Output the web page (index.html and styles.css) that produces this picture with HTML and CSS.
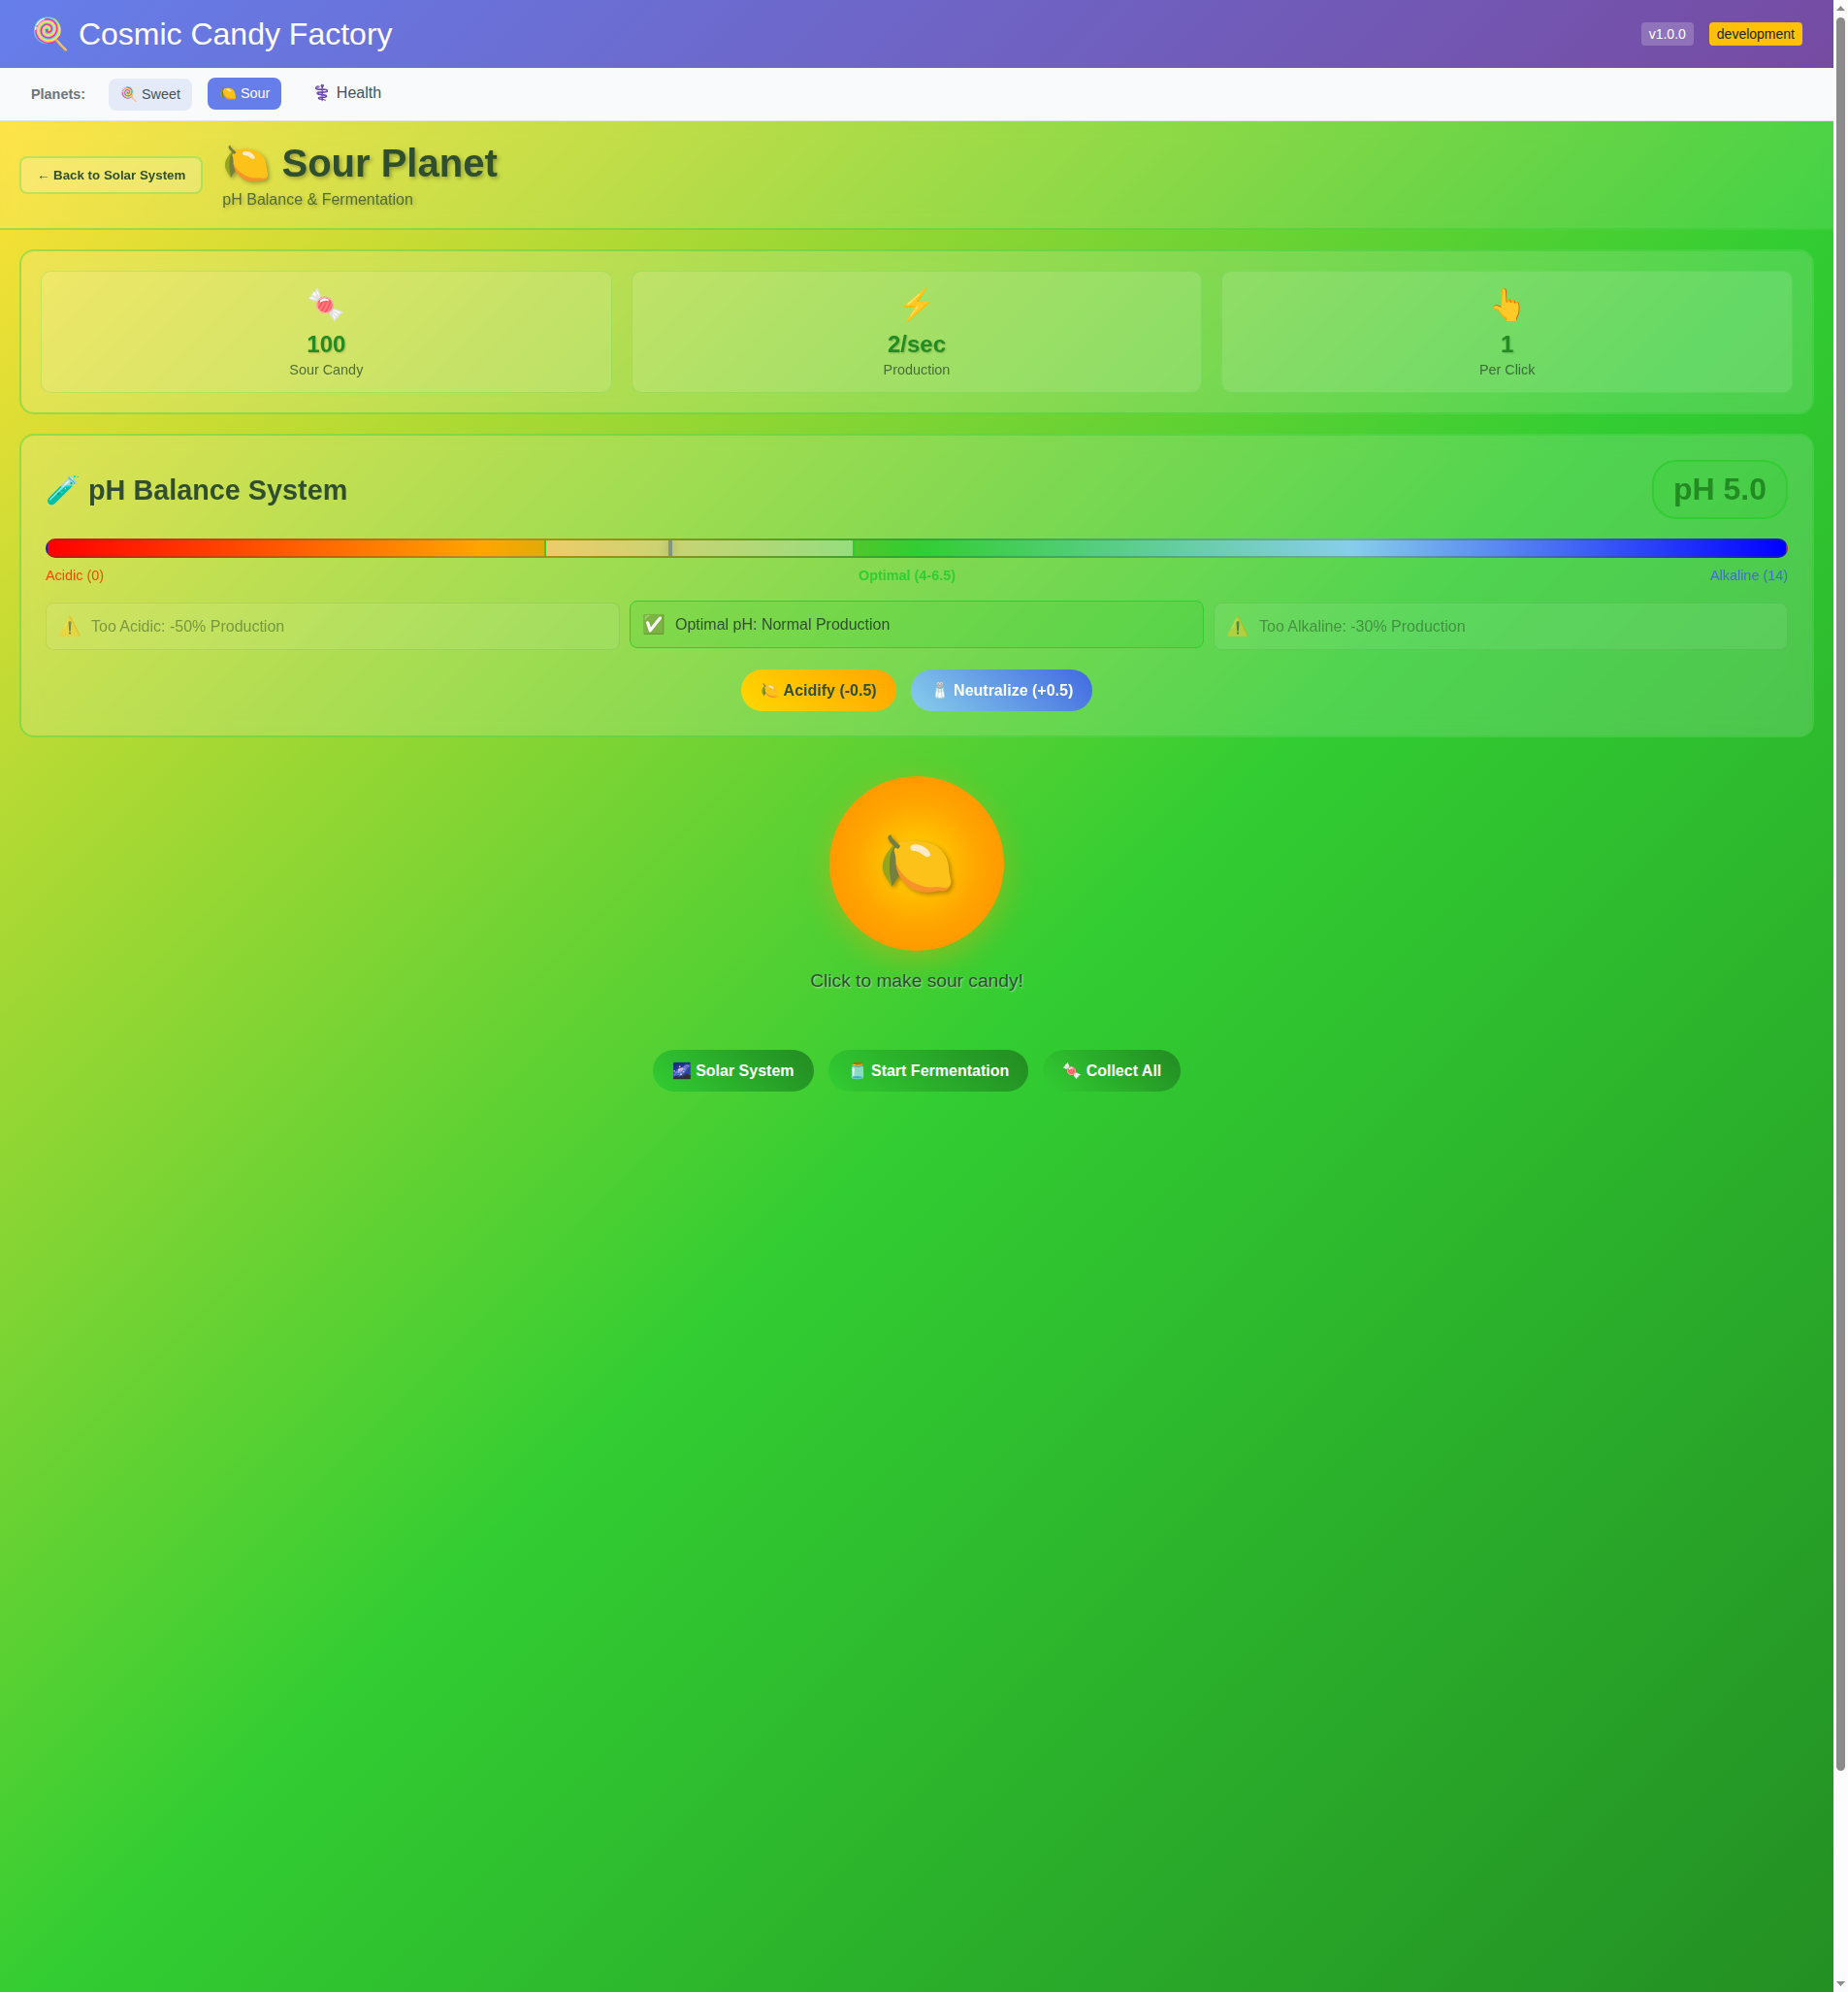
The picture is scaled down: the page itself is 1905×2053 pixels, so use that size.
FILE: index.html
```
<!DOCTYPE html>
<html lang="en">
<head>
<meta charset="UTF-8">
<title>Cosmic Candy Factory</title>
<link rel="stylesheet" href="styles.css">
</head>
<body>
<div class="window">
  <div class="app">
    <header class="app-header">
      <div class="app-title">🍭 Cosmic Candy Factory</div>
      <div class="app-info">
        <span class="badge badge-version">v1.0.0</span>
        <span class="badge badge-env">development</span>
      </div>
    </header>
    <nav class="planet-nav">
      <span class="nav-label">Planets:</span>
      <a class="nav-item nav-sweet">🍭 Sweet</a>
      <a class="nav-item nav-active">🍋 Sour</a>
      <a class="nav-item nav-health">⚕️ Health</a>
    </nav>
    <main class="planet">
      <section class="planet-header">
        <button class="back-button">← Back to Solar System</button>
        <div class="planet-title">
          <h1>🍋 Sour Planet</h1>
          <p>pH Balance &amp; Fermentation</p>
        </div>
      </section>

      <section class="card stats">
        <div class="stat"><div class="stat-icon">🍬</div><div class="stat-value">100</div><div class="stat-label">Sour Candy</div></div>
        <div class="stat"><div class="stat-icon">⚡</div><div class="stat-value">2/sec</div><div class="stat-label">Production</div></div>
        <div class="stat"><div class="stat-icon">👆</div><div class="stat-value">1</div><div class="stat-label">Per Click</div></div>
      </section>

      <section class="card ph">
        <div class="ph-head">
          <h2>🧪 pH Balance System</h2>
          <div class="ph-value">pH 5.0</div>
        </div>
        <div class="ph-bar">
          <div class="ph-indicator" style="left: 35.714%"></div>
          <div class="ph-optimal" style="left: 28.57%; width: 17.86%"></div>
        </div>
        <div class="ph-labels">
          <span class="acidic">Acidic (0)</span>
          <span class="optimal">Optimal (4-6.5)</span>
          <span class="alkaline">Alkaline (14)</span>
        </div>
        <div class="effects">
          <div class="effect"><span class="effect-icon">⚠️</span><span>Too Acidic: -50% Production</span></div>
          <div class="effect effect-active"><span class="effect-icon">✅</span><span>Optimal pH: Normal Production</span></div>
          <div class="effect"><span class="effect-icon">⚠️</span><span>Too Alkaline: -30% Production</span></div>
        </div>
        <div class="button-row">
          <button class="pill acidify">🍋 Acidify (-0.5)</button>
          <button class="pill neutralize">🧂 Neutralize (+0.5)</button>
        </div>
      </section>

      <section class="clicker">
        <button class="candy-button">🍋</button>
        <p>Click to make sour candy!</p>
      </section>

      <section class="button-row actions">
        <button class="pill action">🌌 Solar System</button>
        <button class="pill action">🫙 Start Fermentation</button>
        <button class="pill action">🍬 Collect All</button>
      </section>
    </main>
  </div>
  <div class="scrollbar">
    <svg width="9" height="5" viewBox="0 0 9 5"><path d="M0 5 4.5 0 9 5z" fill="#8b8b8b"/></svg>
    <div class="thumb"></div>
    <svg class="arrow-down" width="9" height="5" viewBox="0 0 9 5"><path d="M0 0 4.5 5 9 0z" fill="#8b8b8b"/></svg>
  </div>
</div>
</body>
</html>
```
FILE: styles.css
```
* { box-sizing: border-box; margin: 0; padding: 0; }

body {
  font-family: "Liberation Sans", Arial, sans-serif;
  font-size: 16px;
  color: #2f4f2f;
}

button { font-family: inherit; border: none; }

.window { display: flex; height: 2053px; overflow: hidden; }
.app { flex: 1; min-width: 0; }

.app-header {
  display: flex;
  align-items: center;
  justify-content: space-between;
  height: 70px;
  padding: 0 32px;
  background: linear-gradient(135deg, #667eea 0%, #764ba2 100%);
  color: #fff;
}
.app-title { font-size: 32px; }
.app-info { display: flex; gap: 16px; }
.badge { padding: 4px 8px; border-radius: 4px; font-size: 14px; line-height: 16px; }
.badge-version { background: rgba(255, 255, 255, 0.2); }
.badge-env { background: #ffc107; color: #212529; }

.planet-nav {
  display: flex;
  align-items: center;
  gap: 16px;
  height: 55px;
  padding: 0 32px;
  background: #f8fafc;
  border-bottom: 1px solid #dee2e6;
  font-size: 14.4px;
  color: #495057;
}
.nav-label { font-weight: bold; color: #6c757d; margin-right: 8px; }
.nav-item { padding: 8px 12px; border-radius: 8px; line-height: 17px; }
.nav-sweet { background: rgba(102, 126, 234, 0.12); }
.nav-active { background: #667eea; color: #fff; transform: translateY(-1px); }
.nav-health { padding: 8px 16px; font-size: 16px; transform: translateY(-2px); }

.planet {
  height: 2053px;
  background: linear-gradient(135deg, #ffe135 0%, #32cd32 50%, #228b22 100%);
}

.planet-header {
  display: flex;
  align-items: center;
  gap: 20px;
  height: 112px;
  padding: 0 20px;
  background: rgba(255, 255, 255, 0.1);
  backdrop-filter: blur(10px);
  border-bottom: 2px solid rgba(50, 205, 50, 0.4);
}
.back-button {
  padding: 10px 16px;
  border: 2px solid rgba(50, 205, 50, 0.3);
  border-radius: 8px;
  background: rgba(255, 255, 255, 0.2);
  color: #2f4f2f;
  font-size: 13.333px;
  font-weight: bold;
}
.planet-title { text-shadow: 2px 2px 4px rgba(0, 0, 0, 0.3); }
.planet-title h1 { font-size: 40px; }
.planet-title p { margin-top: 5px; opacity: 0.8; }

.card {
  margin: 20px;
  border: 2px solid rgba(50, 205, 50, 0.4);
  border-radius: 15px;
  background: rgba(255, 255, 255, 0.15);
  backdrop-filter: blur(10px);
}
.stats {
  display: grid;
  grid-template-columns: repeat(3, 1fr);
  gap: 20px;
  height: 170px;
  padding: 20px;
}
.stat {
  padding: 16px 15px 14px;
  border: 1px solid rgba(50, 205, 50, 0.2);
  border-radius: 10px;
  background: rgba(255, 255, 255, 0.12);
  text-align: center;
}
.stat-icon { font-size: 32px; line-height: 37px; margin-bottom: 8px; }
.stat-value {
  font-size: 24px;
  line-height: 27px;
  font-weight: bold;
  color: #228b22;
  text-shadow: 1px 1px 2px rgba(0, 0, 0, 0.2);
}
.stat-label { margin-top: 5px; font-size: 14.4px; line-height: 17px; opacity: 0.8; }

.ph { height: 313px; padding: 25px; }
.ph-head { display: flex; align-items: center; justify-content: space-between; margin-bottom: 20px; height: 61px; }
.ph-head h2 { font-size: 28.8px; }
.ph-value {
  padding: 10px 20px;
  border: 2px solid #32cd32;
  border-radius: 25px;
  background: rgba(50, 205, 50, 0.2);
  color: #228b22;
  font-size: 32px;
  line-height: 37px;
  font-weight: bold;
}
.ph-bar {
  position: relative;
  height: 20px;
  border: 2px solid rgba(47, 79, 47, 0.3);
  border-radius: 10px;
  background: linear-gradient(90deg, #ff0000 0%, #ffa500 25%, #32cd32 50%, #87ceeb 75%, #0000ff 100%);
  overflow: hidden;
}
.ph-optimal {
  position: absolute;
  top: 0;
  height: 100%;
  border: solid #32cd32;
  border-width: 0 2px;
  background: rgba(255, 255, 255, 0.4);
}
.ph-indicator {
  position: absolute;
  top: 0;
  width: 4px;
  height: 100%;
  background: #2f4f2f;
  box-shadow: 0 0 10px rgba(0, 0, 0, 0.5);
}
.ph-labels { display: flex; justify-content: space-between; margin-top: 10px; font-size: 14.4px; line-height: 16px; }
.acidic { color: #ff4500; }
.optimal { color: #32cd32; font-weight: bold; }
.alkaline { color: #4169e1; }

.effects { display: grid; grid-template-columns: repeat(3, 1fr); gap: 10px; margin: 20px 0; }
.effect {
  display: flex;
  align-items: center;
  gap: 10px;
  height: 49px;
  padding: 0 12px;
  border: 1px solid rgba(47, 79, 47, 0.2);
  border-radius: 8px;
  background: rgba(255, 255, 255, 0.15);
  opacity: 0.5;
}
.effect-icon { font-size: 19.2px; }
.effect-active {
  border-color: #32cd32;
  background: rgba(50, 205, 50, 0.2);
  opacity: 1;
  transform: translateY(-2px);
}

.button-row { display: flex; justify-content: center; gap: 15px; }
.pill { height: 43px; padding: 0 20px; border-radius: 25px; font-size: 16px; font-weight: bold; color: #fff; }
.acidify { background: linear-gradient(45deg, #ffd700, #ffa500); color: #2f4f2f; }
.neutralize { background: linear-gradient(45deg, #87ceeb, #4169e1); }
.action { background: linear-gradient(45deg, #32cd32, #228b22); }

.clicker { display: flex; flex-direction: column; align-items: center; margin-top: 40px; }
.candy-button {
  width: 180px;
  height: 180px;
  border-radius: 50%;
  background: radial-gradient(circle, #ffd700 0%, #ffa500 50%, #ff8c00 100%);
  box-shadow: 0 8px 32px rgba(255, 165, 0, 0.4);
  font-size: 64px;
  text-shadow: 2px 2px 4px rgba(0, 0, 0, 0.3);
}
.clicker p { margin-top: 20px; font-size: 19.2px; line-height: 22px; text-shadow: 1px 1px 2px rgba(255, 255, 255, 0.5); }
.actions { margin-top: 60px; }

.scrollbar {
  display: flex;
  flex-direction: column;
  align-items: center;
  width: 15px;
  padding: 6px 0;
  background: #fcfcfc;
}
.thumb { width: 9px; height: 1807px; margin-top: 7px; border-radius: 4.5px; background: #8b8b8b; }
.arrow-down { margin-top: auto; }
```
